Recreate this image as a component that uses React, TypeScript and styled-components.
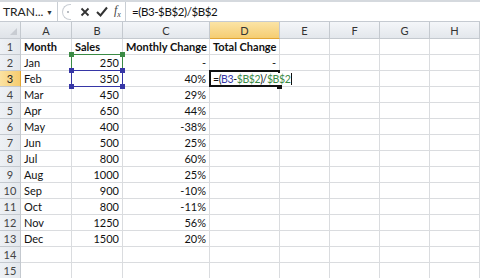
import React from 'react';
import styled, {createGlobalStyle, css} from 'styled-components';

const GlobalStyle = createGlobalStyle`
  html, body {
    margin: 0;
    padding: 0;
    background: #fff;
    width: 480px;
    height: 278px;
    overflow: hidden;
    font-family: Lato, "Liberation Sans", sans-serif;
  }
`;

const Sheet = styled.div`
  width: 480px;
  height: 278px;
  display: flex;
  flex-direction: column;
  background: #fff;
  overflow: hidden;
`;

const FormulaBar = styled.div`
  height: 22px;
  display: flex;
  align-items: center;
  background: #fff;
  border-top: 2px solid #d5d9de;
  border-bottom: 1px solid #c5cad1;
  box-sizing: border-box;
  flex-shrink: 0;
`;

const NameBox = styled.div`
  width: 58px;
  height: 100%;
  display: flex;
  align-items: center;
  justify-content: space-between;
  padding: 0 4px 0 3px;
  box-sizing: border-box;
  font-size: 12px;
  color: #222;
  border-right: 1px solid #c9ced4;
`;

const Caret = styled.span`
  font-size: 7px;
  color: #333;
`;

const ButtonPill = styled.div`
  width: 68px;
  height: 100%;
  display: flex;
  align-items: center;
  gap: 6px;
  padding-left: 4px;
  box-sizing: border-box;
  border-right: 1px solid #c9ced4;
  color: #333;
`;

const Grip = styled.span`
  width: 9px;
  height: 16px;
  box-sizing: border-box;
  border: 1px solid #c9ced4;
  border-right: none;
  border-radius: 8px 0 0 8px;
  display: flex;
  align-items: center;
  justify-content: center;
  margin-right: 3px;
  &::after {
    content: '';
    width: 2px;
    height: 2px;
    background: #b8bcc2;
    margin-left: 2px;
  }
`;

const FxLabel = styled.span`
  font-family: "Liberation Serif", serif;
  font-style: italic;
  font-size: 12px;
  color: #444;
`;

const FxSub = styled.sub`
  font-size: 8px;
`;

const FormulaText = styled.div`
  padding-left: 6px;
  font-size: 11.5px;
  letter-spacing: -0.4px;
  color: #111;
`;

const Grid = styled.div`
  display: grid;
  grid-template-columns: 21px 51px 51px 87px 70px 50px 50px 50px 50px;
  grid-auto-rows: 16px;
  grid-template-rows: 17px;
`;

const headerBase = css`
  display: flex;
  align-items: center;
  justify-content: center;
  box-sizing: border-box;
  font-size: 11px;
  color: #333;
  border-right: 1px solid #c4c9cf;
  border-bottom: 1px solid #c4c9cf;
`;

const ColHead = styled.div<{$active?: boolean}>`
  ${headerBase};
  background: ${p => p.$active
    ? 'linear-gradient(#fbe4a6, #f5cd72)'
    : 'linear-gradient(#f4f6f9, #e3e7ec)'};
  ${p => p.$active && 'border-bottom: 1px solid #e2a533;'}
`;

const Corner = styled.div`
  ${headerBase};
  background: linear-gradient(#eef1f4, #dfe3e8);
  position: relative;
  &::after {
    content: '';
    position: absolute;
    right: 3px;
    bottom: 3px;
    border-left: 7px solid transparent;
    border-bottom: 7px solid #c8ccd2;
  }
`;

const RowHead = styled.div<{$active?: boolean}>`
  ${headerBase};
  font-size: 11px;
  color: ${p => p.$active ? '#222' : '#444'};
  background: ${p => p.$active
    ? 'linear-gradient(90deg, #fbe2a2, #f5cc6f)'
    : 'linear-gradient(90deg, #eef1f5, #e4e8ed)'};
  ${p => p.$active && 'border-right: 1px solid #e2a533;'}
`;

const Cell = styled.div<{$align?: 'left' | 'right'; $bold?: boolean}>`
  position: relative;
  display: flex;
  align-items: center;
  justify-content: ${p => p.$align === 'right' ? 'flex-end' : 'flex-start'};
  padding: 0 3px;
  box-sizing: border-box;
  font-size: 11px;
  font-weight: ${p => p.$bold ? 700 : 400};
  color: #111;
  white-space: nowrap;
  border-right: 1px solid #dadcdf;
  border-bottom: 1px solid #dadcdf;
`;

const RefBox = styled.div<{$color: string}>`
  position: absolute;
  left: -1px;
  top: -1px;
  right: -1px;
  bottom: -1px;
  border: 1.5px solid ${p => p.$color};
  pointer-events: none;
  z-index: 2;
`;

const Handle = styled.span<{$color: string; $x: 'l' | 'r'; $y: 't' | 'b'}>`
  position: absolute;
  width: 5px;
  height: 5px;
  background: ${p => p.$color};
  ${p => p.$x === 'l' ? 'left: -3px;' : 'right: -3px;'}
  ${p => p.$y === 't' ? 'top: -3px;' : 'bottom: -3px;'}
  z-index: 3;
`;

const ActiveBox = styled.div`
  position: absolute;
  left: -1px;
  top: -1px;
  right: -1px;
  bottom: -1px;
  border: 2px solid #111;
  z-index: 2;
  &::after {
    content: '';
    position: absolute;
    right: -4px;
    bottom: -4px;
    width: 5px;
    height: 4px;
    background: #111;
  }
`;

const EditText = styled.span`
  position: relative;
  z-index: 4;
  font-size: 10.5px;
  letter-spacing: -0.4px;
  display: flex;
  align-items: center;
  background: #fff;
`;

const Ref = styled.span<{$color: string}>`
  color: ${p => p.$color};
`;

const Cursor = styled.span`
  display: inline-block;
  width: 1px;
  height: 12px;
  background: #111;
  margin-left: 1px;
`;

const GREEN = '#3a8a44';
const BLUE = '#3636a6';

const cols = ['A', 'B', 'C', 'D', 'E', 'F', 'G', 'H'];

const data: [string, string, string, string][] = [
  ['Month', 'Sales', 'Monthly Change', 'Total Change'],
  ['Jan', '250', '-', '-'],
  ['Feb', '350', '40%', ''],
  ['Mar', '450', '29%', ''],
  ['Apr', '650', '44%', ''],
  ['May', '400', '-38%', ''],
  ['Jun', '500', '25%', ''],
  ['Jul', '800', '60%', ''],
  ['Aug', '1000', '25%', ''],
  ['Sep', '900', '-10%', ''],
  ['Oct', '800', '-11%', ''],
  ['Nov', '1250', '56%', ''],
  ['Dec', '1500', '20%', ''],
  ['', '', '', ''],
  ['', '', '', ''],
];

function EditingFormula() {
  return (
    <span>
      =(<Ref $color={BLUE}>B3</Ref>-<Ref $color={GREEN}>$B$2</Ref>)/<Ref $color={GREEN}>$B$2</Ref>
    </span>
  );
}

function Row({row, index}: {row: [string, string, string, string]; index: number}) {
  const n = index + 1;
  const header = n === 1;
  const editing = n === 3;
  return (
    <>
      <RowHead $active={editing}>{n}</RowHead>
      <Cell $bold={header}>{row[0]}</Cell>
      <Cell $bold={header} $align={header ? 'left' : 'right'}>
        {row[1]}
        {n === 2 && (
          <RefBox $color={GREEN}>
            <Handle $color={GREEN} $x="l" $y="t"/>
            <Handle $color={GREEN} $x="r" $y="t"/>
          </RefBox>
        )}
        {editing && (
          <RefBox $color={BLUE}>
            <Handle $color={BLUE} $x="l" $y="t"/>
            <Handle $color={BLUE} $x="r" $y="t"/>
            <Handle $color={BLUE} $x="l" $y="b"/>
            <Handle $color={BLUE} $x="r" $y="b"/>
          </RefBox>
        )}
      </Cell>
      <Cell $bold={header} $align={header ? 'left' : 'right'}>{row[2]}</Cell>
      <Cell $bold={header} $align={header || editing ? 'left' : 'right'}>
        {editing ? (
          <>
            <ActiveBox/>
            <EditText><EditingFormula/><Cursor/></EditText>
          </>
        ) : row[3]}
      </Cell>
      <Cell/>
      <Cell/>
      <Cell/>
      <Cell/>
    </>
  );
}

export default function App() {
  return (
    <Sheet>
      <GlobalStyle/>
      <FormulaBar>
        <NameBox>TRAN...<Caret>▼</Caret></NameBox>
        <ButtonPill>
          <Grip/>
          <svg width="10" height="10" viewBox="0 0 10 10">
            <path d="M1.5 1.5 L8.5 8.5 M8.5 1.5 L1.5 8.5" stroke="#333" strokeWidth="1.8"/>
          </svg>
          <svg width="12" height="11" viewBox="0 0 12 11">
            <path d="M1 6 L4.5 9.5 L11 1.5" stroke="#333" strokeWidth="2" fill="none"/>
          </svg>
          <FxLabel>f<FxSub>x</FxSub></FxLabel>
        </ButtonPill>
        <FormulaText>=(B3-$B$2)/$B$2</FormulaText>
      </FormulaBar>
      <Grid>
        <Corner/>
        {cols.map(c => <ColHead key={c} $active={c === 'D'}>{c}</ColHead>)}
        {data.map((row, i) => <Row key={i} row={row} index={i}/>)}
      </Grid>
    </Sheet>
  );
}
